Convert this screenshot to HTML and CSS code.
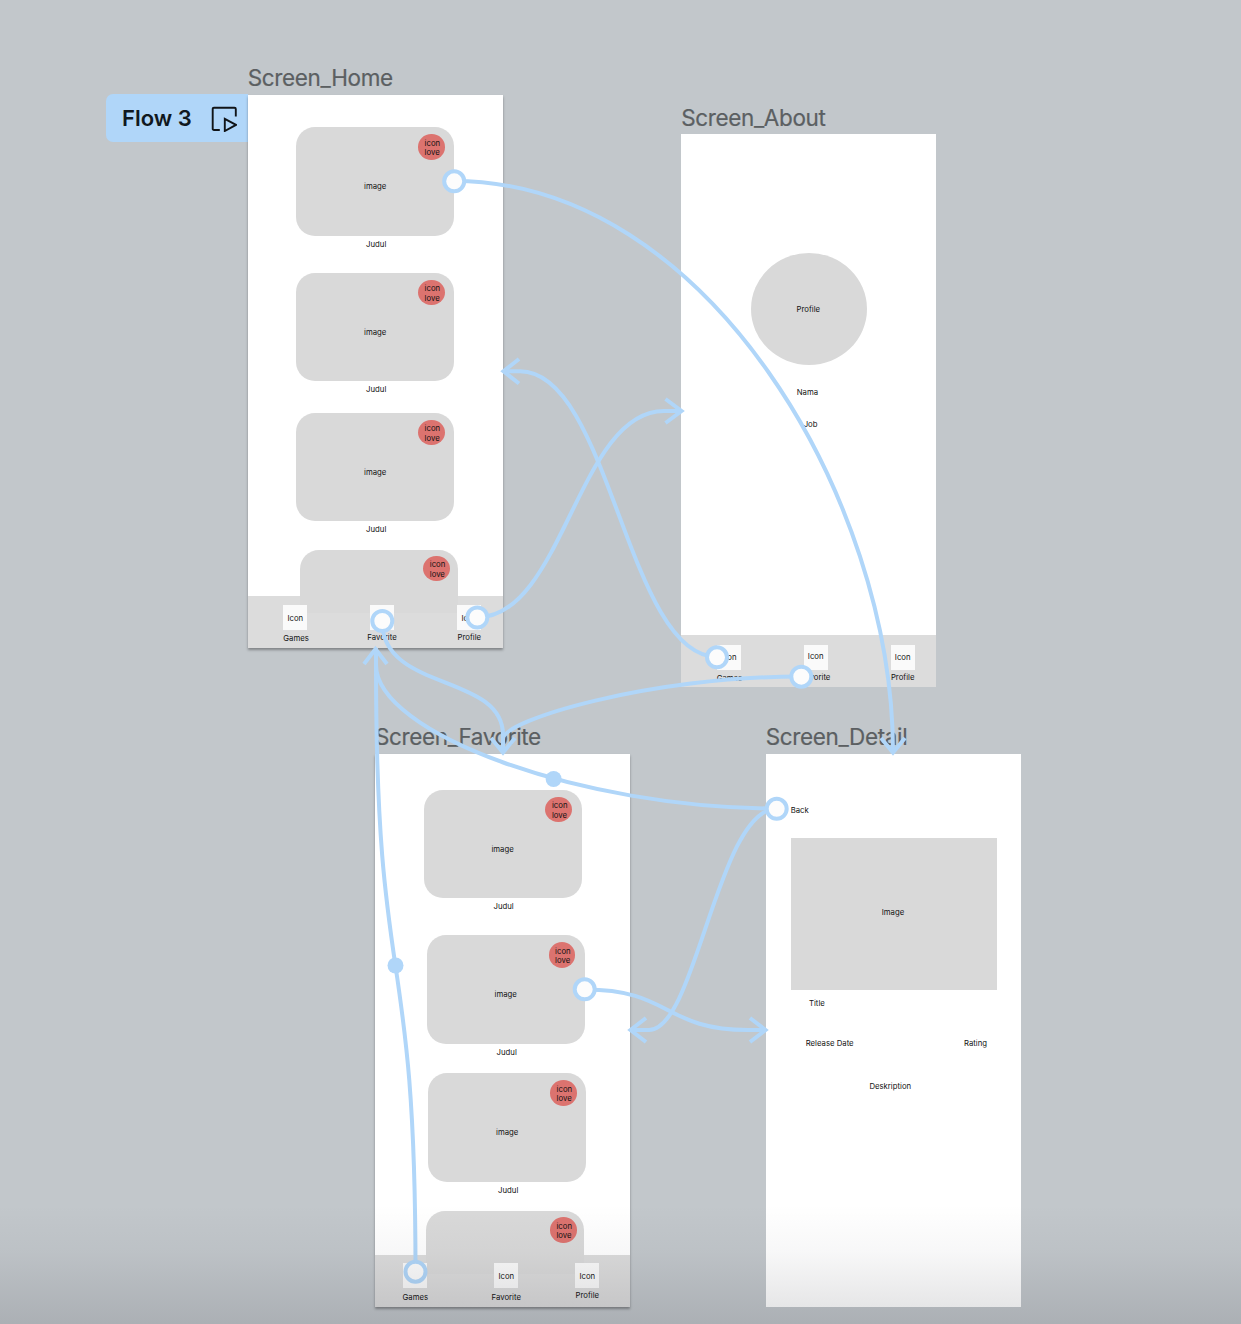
FILE: index.html
```html
<!DOCTYPE html>
<html lang="en">
<head>
<meta charset="utf-8">
<title>Prototype flow</title>
<link rel="stylesheet" href="styles.css">
</head>
<body>
<main class="canvas">
  <div class="flow-tag">
    <span>Flow 3</span>
    <svg class="flow-icon" width="26" height="26" viewBox="0 0 26 26" fill="none" stroke="#101418" stroke-width="1.9" stroke-linejoin="round"><path d="M8.800 24H3Q1.700 24 1.700 22.700V3Q1.700 1.700 3 1.700H23.500Q24.800 1.700 24.800 3V10.500"/><path stroke-linejoin="miter" d="M13.800 12.800V25L25 18.900Z"/></svg>
  </div>

  <section class="artboard home">
    <h2>Screen_Home</h2>
    <div class="screen raised">
      <div class="cards">
        <figure><div class="card"><span>image</span><b class="love">icon<br>love</b></div><figcaption>Judul</figcaption></figure>
        <figure><div class="card"><span>image</span><b class="love">icon<br>love</b></div><figcaption>Judul</figcaption></figure>
        <figure><div class="card"><span>image</span><b class="love">icon<br>love</b></div><figcaption>Judul</figcaption></figure>
        <figure><div class="card cut"><b class="love">icon<br>love</b></div></figure>
      </div>
      <nav>
        <a><i>Icon</i><span>Games</span></a>
        <a><i></i><span>Favorite</span></a>
        <a><i>Icon</i><span>Profile</span></a>
      </nav>
    </div>
  </section>

  <section class="artboard about">
    <h2>Screen_About</h2>
    <div class="screen">
      <div class="avatar">Profile</div>
      <p class="name">Nama</p>
      <p class="job">Job</p>
      <nav>
        <a><i>Icon</i><span>Games</span></a>
        <a><i>Icon</i><span>Favorite</span></a>
        <a><i>Icon</i><span>Profile</span></a>
      </nav>
    </div>
  </section>

  <section class="artboard favorite">
    <h2>Screen_Favorite</h2>
    <div class="screen raised">
      <div class="cards">
        <figure><div class="card"><span>image</span><b class="love">icon<br>love</b></div><figcaption>Judul</figcaption></figure>
        <figure><div class="card"><span>image</span><b class="love">icon<br>love</b></div><figcaption>Judul</figcaption></figure>
        <figure><div class="card"><span>image</span><b class="love">icon<br>love</b></div><figcaption>Judul</figcaption></figure>
        <figure><div class="card cut"><b class="love">icon<br>love</b></div></figure>
      </div>
      <nav>
        <a><i></i><span>Games</span></a>
        <a><i>Icon</i><span>Favorite</span></a>
        <a><i>Icon</i><span>Profile</span></a>
      </nav>
    </div>
  </section>

  <section class="artboard detail">
    <h2>Screen_Detail</h2>
    <div class="screen">
      <p class="back">Back</p>
      <div class="cover">Image</div>
      <p class="title">Title</p>
      <div class="meta"><span>Release Date</span><span>Rating</span></div>
      <p class="description">Deskription</p>
    </div>
  </section>

  <svg class="connectors" width="1241" height="1324" viewBox="0 0 1241 1324">
    <g class="wire">
      <path d="M454 181C707 181 893 500 893 752"/>
      <path d="M717 657C627 657 610 371.3 520 371.3H503"/>
      <path d="M477 617.5C563 617.5 578 411 664 411H682"/>
      <path d="M382 621C382 692 503 673 503 735V752"/>
      <path d="M801 676.5C650 676.5 503 720 503 739V752"/>
      <path d="M777 808.5C580 808.5 376 733 376 665V648"/>
      <path d="M777 808.5C718 808.5 696 1030 649 1030H630"/>
      <path d="M585 989.5C671 989.5 664 1030 748 1030H766"/>
      <path d="M415.5 1272C415.5 930 376 1005 376 665V648"/>
      <path d="M519 359L503.5 371.3L519 383.500"/>
      <path d="M665.500 399L681.500 411L665.500 423"/>
      <path d="M364 664L375.500 649L387 664"/>
      <path d="M491 738L503 752.500L515 738"/>
      <path d="M881 738L893 752.500L905 738"/>
      <path d="M646 1018L630.500 1030L646 1042"/>
      <path d="M750 1018L765.500 1030L750 1042"/>
    </g>
    <g class="joint">
      <circle cx="553.600" cy="779" r="8"/>
      <circle cx="395.500" cy="965.500" r="8"/>
    </g>
    <g class="port">
      <circle cx="454.200" cy="181.300" r="10"/>
      <circle cx="382.300" cy="621" r="10"/>
      <circle cx="477.300" cy="617.500" r="10"/>
      <circle cx="717" cy="657.300" r="10"/>
      <circle cx="801.300" cy="676.700" r="10"/>
      <circle cx="776.700" cy="808.800" r="10"/>
      <circle cx="584.700" cy="989.300" r="10"/>
      <circle cx="415.500" cy="1271.700" r="10"/>
    </g>
  </svg>
  <div class="fade"></div>
</main>
</body>
</html>
```
FILE: styles.css
```css
* { box-sizing: border-box; margin: 0; padding: 0; }

body {
  font-family: Inter, "Liberation Sans", sans-serif;
  color: #111;
}

.canvas {
  position: relative;
  width: 1241px;
  height: 1324px;
  overflow: hidden;
  background: #c2c7cb;
}

/* Flow starting point */
.flow-tag {
  position: absolute;
  left: 106px;
  top: 94px;
  width: 142px;
  height: 48px;
  padding: 0 11px 0 16px;
  display: flex;
  align-items: center;
  justify-content: space-between;
  border-radius: 7px 0 0 7px;
  background: #b0d6f9;
  color: #101820;
  font-size: 22px;
  font-weight: 600;
}

.flow-icon { display: block; margin-top: 1px; }

/* Artboards */
.artboard {
  position: absolute;
  width: 255.300px;
  display: flex;
  flex-direction: column;
  font-size: 7.750px;
}

.artboard.home { left: 247.800px; top: 61px; }
.artboard.about { left: 681.200px; top: 100.400px; }
.artboard.favorite { left: 375px; top: 719.700px; }
.artboard.detail { left: 765.700px; top: 719.700px; }

h2 {
  height: 34px;
  line-height: 34px;
  font-size: 22.500px;
  font-weight: 400;
  letter-spacing: -.36px;
  color: #5b5f62;
  white-space: nowrap;
  -webkit-text-stroke: .2px #5b5f62;
}

.about h2 { line-height: 36px; }

.screen {
  position: relative;
  height: 553px;
  display: flex;
  flex-direction: column;
  background: #fff;
  overflow: hidden;
}

.raised { box-shadow: 0 2px 2.500px rgba(0, 0, 0, .34); }

/* Cards */
.cards {
  position: relative;
  z-index: 1;
  height: 501px;
}

figure { width: 158px; margin-left: 48.400px; }

.card {
  position: relative;
  height: 108.500px;
  padding-top: 10px;
  display: flex;
  align-items: center;
  justify-content: center;
  border-radius: 19px;
  background: #d9d9d9;
}

.card.cut { height: 63px; border-radius: 19px 19px 0 0; }

figcaption {
  height: 17px;
  line-height: 17px;
  padding-left: 2px;
  text-align: center;
}

.love {
  position: absolute;
  top: 7px;
  left: 121.900px;
  width: 26.700px;
  height: 25.700px;
  padding: 4.600px 0 0 6.500px;
  border-radius: 50%;
  background: #dc736f;
  font-weight: 400;
  line-height: 9.600px;
}

.cut .love { top: 6.300px; left: 123.700px; }

.home figure:nth-child(1) { padding-top: 32px; }
.home figure:nth-child(2) { padding-top: 20px; }
.home figure:nth-child(3) { padding-top: 14.500px; }
.home figure:nth-child(4) { padding-top: 11.500px; margin-left: 51.800px; }

.favorite figure:nth-child(1) { padding-top: 36px; margin-left: 48.600px; }
.favorite figure:nth-child(2) { padding-top: 20px; margin-left: 51.700px; }
.favorite figure:nth-child(3) { padding-top: 12.500px; margin-left: 53.200px; }
.favorite figure:nth-child(4) { padding-top: 12px; margin-left: 51.300px; }

/* Tab bar */
nav {
  position: relative;
  height: 52px;
  margin-top: auto;
  padding-top: 9.300px;
  display: grid;
  background: #dcdcdc;
}

.raised nav { position: static; }
.home nav { grid-template-columns: 35.500px 86.700px 87.300px 24px; }
.about nav { grid-template-columns: 35.500px 87px 87px 24px; }
.favorite nav { grid-template-columns: 28.300px 91px 81px 24px; padding-top: 8.800px; }
nav::before { content: ""; }

nav a {
  position: relative;
  z-index: 2;
  width: 24px;
  display: flex;
  flex-direction: column;
  align-items: center;
}

nav i {
  width: 24px;
  height: 25px;
  flex: none;
  background: #fafafa;
  font-style: normal;
  line-height: 27px;
  text-align: center;
}

nav span { line-height: 14px; }
.home a:first-child span { margin: 1px 0 0 1.500px; }
.favorite a span { margin-top: 1.800px; }
.favorite a:last-child span { margin-top: 0; }
.about i { line-height: 25px; }
.about a:nth-child(2) i { line-height: 23px; }
.about a:first-child span { margin: 1px 0 0 1.500px; }

/* About */
.avatar {
  width: 116px;
  height: 112px;
  margin: 118.500px 0 0 69.700px;
  padding-right: 1px;
  border-radius: 50%;
  background: #d9d9d9;
  line-height: 112px;
  text-align: center;
}

.name, .job { line-height: 14px; }
.name { margin: 20px 0 0 115.500px; }
.job { margin: 18px 0 0 122.500px; }

/* Detail */
.back { margin: 49px 0 0 25px; line-height: 14px; }

.cover {
  width: 206px;
  height: 152.500px;
  margin: 21px 0 0 25.300px;
  padding-right: 2px;
  background: #d9d9d9;
  line-height: 149px;
  text-align: center;
}

.title { margin: 6px 0 0 43.300px; line-height: 14px; }

.meta {
  display: flex;
  justify-content: space-between;
  margin-top: 26px;
  padding: 0 34px 0 40px;
  line-height: 14px;
}

.description { margin: 29px 0 0 103.700px; line-height: 14px; }

/* Prototype connections */
.connectors { position: absolute; inset: 0; z-index: 5; }
.wire { fill: none; stroke: #b0d6f9; stroke-width: 4; }
.joint { fill: #b0d6f9; }
.port { fill: #fcfcfc; stroke: #b0d6f9; stroke-width: 4; }

.fade {
  position: absolute;
  inset: auto 0 0;
  z-index: 6;
  height: 120px;
  background: linear-gradient(rgba(20, 20, 30, 0), rgba(20, 20, 30, .03) 40%, rgba(20, 20, 30, .13));
}
```
